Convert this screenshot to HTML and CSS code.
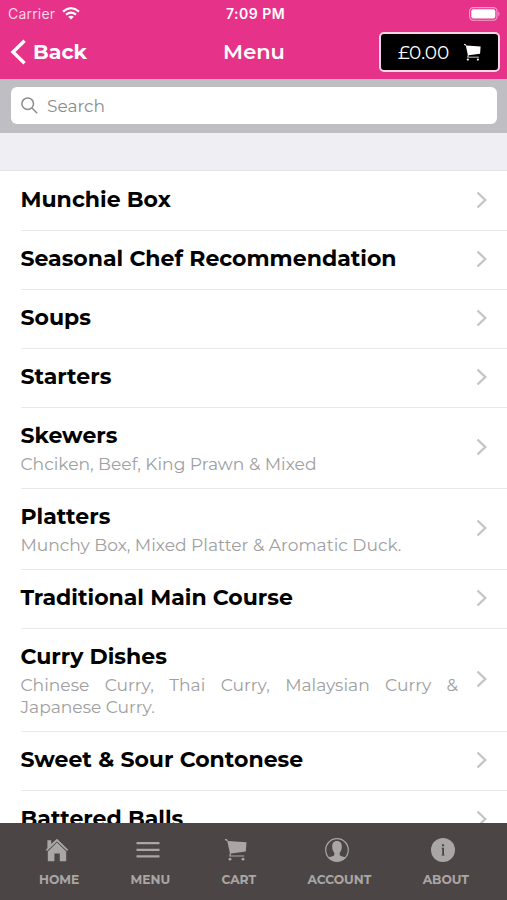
FILE: index.html
```html
<!DOCTYPE html>
<html lang="en">
<head>
<meta charset="UTF-8">
<meta name="viewport" content="width=device-width, initial-scale=1.0">
<title>Menu</title>
<link rel="stylesheet" href="styles.css">
</head>
<body>
<svg class="defs">
    <symbol id="cart" viewBox="0 0 22 22">
        <path d="M0 0 H1.8 L3 2 L21.5 3.2 L20.8 12.6 L6 14.4 L5.6 16.4 H19.3 V17.5 H4.2 L4.9 14 L2.4 2.4 L0 1Z"/>
        <circle cx="5" cy="20.2" r="1.4"/>
        <circle cx="18" cy="20.2" r="1.4"/>
    </symbol>
    <symbol id="chevron" viewBox="0 0 11 18">
        <path d="M1.5 1.5 L9.3 9 L1.5 16.5" fill="none" stroke="#c5c5c7" stroke-width="2.4"/>
    </symbol>
</svg>

<header>
    <div class="status">
        <div class="carrier">
            <span>Carrier</span>
            <svg width="18" height="13" viewBox="0 0 18 13" fill="none" stroke="#fff" stroke-width="2.2">
                <path d="M1 4.6 Q9 -2.2 17 4.6"/>
                <path d="M4 7.7 Q9 3.6 14 7.7"/>
                <path d="M6.2 9.7 Q9 7.7 11.8 9.7 L9 12.6Z" fill="#fff" stroke="none"/>
            </svg>
        </div>
        <div class="time">7:09 PM</div>
        <svg class="battery" width="32" height="14" viewBox="0 0 32 14">
            <rect x="0.6" y="0.6" width="27.4" height="12.6" rx="3.6" fill="none" stroke="#f4a3cd" stroke-width="1.1"/>
            <rect x="2.3" y="2.3" width="24" height="9.2" rx="2" fill="#fff"/>
            <path d="M29.4 4.6 Q31.6 6.9 29.4 9.2Z" fill="#f4a3cd"/>
        </svg>
    </div>
    <div class="navbar">
        <div class="back">
            <svg width="16" height="26" viewBox="0 0 16 26"><path d="M14.6 1.8 L3 13 L14.6 24.2" fill="none" stroke="#fff" stroke-width="3.4"/></svg>
            <span>Back</span>
        </div>
        <h1>Menu</h1>
        <div class="basket">
            <span>£0.00</span>
            <svg width="17" height="17"><use href="#cart"/></svg>
        </div>
    </div>
</header>

<div class="searchbar">
    <div class="search">
        <svg width="17" height="17" viewBox="0 0 17 17" fill="none" stroke="#8b8b8d" stroke-width="1.5"><circle cx="6.7" cy="6.7" r="5.8"/><path d="M11 11 L16.2 16.2"/></svg>
        <span>Search</span>
    </div>
</div>

<div class="spacer"></div>

<main>
    <div class="row">
        <div class="text"><h2>Munchie Box</h2></div>
        <svg class="chevron"><use href="#chevron"/></svg>
    </div>
    <div class="row">
        <div class="text"><h2>Seasonal Chef Recommendation</h2></div>
        <svg class="chevron"><use href="#chevron"/></svg>
    </div>
    <div class="row">
        <div class="text"><h2>Soups</h2></div>
        <svg class="chevron"><use href="#chevron"/></svg>
    </div>
    <div class="row">
        <div class="text"><h2>Starters</h2></div>
        <svg class="chevron"><use href="#chevron"/></svg>
    </div>
    <div class="row">
        <div class="text">
            <h2>Skewers</h2>
            <p>Chciken, Beef, King Prawn &amp; Mixed</p>
        </div>
        <svg class="chevron"><use href="#chevron"/></svg>
    </div>
    <div class="row">
        <div class="text">
            <h2>Platters</h2>
            <p>Munchy Box, Mixed Platter &amp; Aromatic Duck.</p>
        </div>
        <svg class="chevron"><use href="#chevron"/></svg>
    </div>
    <div class="row">
        <div class="text"><h2>Traditional Main Course</h2></div>
        <svg class="chevron"><use href="#chevron"/></svg>
    </div>
    <div class="row">
        <div class="text">
            <h2>Curry Dishes</h2>
            <p>Chinese Curry, Thai Curry, Malaysian Curry &amp; Japanese Curry.</p>
        </div>
        <svg class="chevron"><use href="#chevron"/></svg>
    </div>
    <div class="row">
        <div class="text"><h2>Sweet &amp; Sour Contonese</h2></div>
        <svg class="chevron"><use href="#chevron"/></svg>
    </div>
    <div class="row">
        <div class="text"><h2>Battered Balls</h2></div>
        <svg class="chevron"><use href="#chevron"/></svg>
    </div>
</main>

<nav class="tabs">
    <div class="tab">
        <svg viewBox="0 0 24 24"><path d="M0.8 11.8 L2.4 10.2 V2.2 H6.2 V6 L12 0.8 L23.2 11.8 L22 13 L12 3.6 L2 13Z"/><path d="M2.8 13.4 L12 4.6 L21.2 13.4 V23.2 H14.8 V15.6 H9.4 V23.2 H2.8Z"/></svg>
        <span>HOME</span>
    </div>
    <div class="tab">
        <svg viewBox="0 0 24 24"><path d="M0.5 4 H23.5 V6.2 H0.5Z M0.5 10.8 H23.5 V13 H0.5Z M0.5 17.2 H23.5 V19.4 H0.5Z"/></svg>
        <span>MENU</span>
    </div>
    <div class="tab">
        <svg viewBox="-1 -1 24 24"><use href="#cart" width="22" height="22"/></svg>
        <span>CART</span>
    </div>
    <div class="tab">
        <svg viewBox="0 0 24 24"><circle cx="12" cy="12" r="11.3" fill="none" stroke="#aaa6a5" stroke-width="1.2"/><path d="M12 3 C8.6 3 7 5.2 7.2 9 C7.3 12 8.4 13.4 9.3 15 V17 C8.5 18.5 5 18.5 3.4 19.6 C5.4 22 8.5 23.2 12 23.2 C15.5 23.2 18.6 22 20.6 19.6 C19 18.5 15.5 18.5 14.7 17 V15 C15.6 13.4 16.7 12 16.8 9 C17 5.2 15.4 3 12 3Z"/></svg>
        <span>ACCOUNT</span>
    </div>
    <div class="tab">
        <svg viewBox="0 0 24 24"><circle cx="12" cy="12" r="12"/><path d="M11 6.2 H13.1 V8.2 H11Z M10.4 9.7 H13 V16.7 H13.8 V17.6 H10.4 V16.7 H11.2 V10.6 H10.4Z" fill="#4b4645"/></svg>
        <span>ABOUT</span>
    </div>
</nav>
</body>
</html>
```
FILE: styles.css
```css
* {
    box-sizing: border-box;
}
body {
    font-family: Montserrat, Inter, sans-serif;
    margin: 0;
    height: 900px;
    display: flex;
    flex-direction: column;
    overflow: hidden;
    background-color: #fff;
}
.defs {
    display: none;
}
h1, h2, p {
    margin: 0;
}
header {
    height: 79px;
    flex-shrink: 0;
    background-color: #e73289;
    color: #fff;
}
.status {
    height: 27px;
    padding: 0 6px 0 8px;
    display: grid;
    grid-template-columns: 1fr auto 1fr;
    align-items: center;
    font-family: Inter, sans-serif;
    font-size: 14px;
}
.carrier {
    display: flex;
    align-items: center;
    gap: 7px;
    color: #fbd3e6;
    letter-spacing: 0.2px;
}
.time {
    padding-left: 2px;
    font-weight: 600;
    letter-spacing: 0.5px;
}
.battery {
    justify-self: end;
}
.navbar {
    height: 50px;
    padding: 0 7px 0 10px;
    display: grid;
    grid-template-columns: 1fr auto 1fr;
    align-items: center;
}
.back {
    display: flex;
    align-items: center;
    gap: 7px;
    font-size: 20.5px;
    font-weight: 700;
}
.back span {
    padding-bottom: 1px;
}
h1 {
    padding: 0 2px 2px 0;
    font-size: 21px;
    font-weight: 600;
}
.basket {
    justify-self: end;
    width: 121px;
    height: 40px;
    padding: 0 17px 0 17px;
    display: flex;
    align-items: center;
    justify-content: space-between;
    background-color: #000;
    border: 2px solid #f8d6e7;
    border-radius: 5px;
    font-size: 18.5px;
}
.basket svg {
    fill: #fff;
}
.searchbar {
    height: 54px;
    flex-shrink: 0;
    padding: 8px 10px 0 11px;
    background-color: #bfbec3;
}
.search {
    height: 37px;
    padding-left: 10px;
    display: flex;
    align-items: center;
    gap: 9px;
    background-color: #fff;
    border-radius: 6px;
    color: #8b8b8d;
    font-size: 17px;
}
.spacer {
    height: 38px;
    flex-shrink: 0;
    background-color: #efeef3;
    border-bottom: 1px solid #e3e3e6;
}
main {
    flex: 1;
    min-height: 0;
    padding-top: 1px;
    overflow: hidden;
}
.row {
    margin-left: 20.5px;
    padding: 14px 20px 16px 0;
    display: flex;
    align-items: center;
    gap: 18px;
    border-bottom: 1px solid #e9e9e9;
}
.text {
    flex: 1;
}
h2 {
    font-size: 22px;
    font-weight: 700;
    line-height: 28px;
    color: #000;
}
.row p {
    margin: 3px 0 -3px;
    font-size: 17.1px;
    font-weight: 400;
    line-height: 22px;
    text-align: justify;
    color: #a0a0a0;
}
.chevron {
    width: 11px;
    height: 18px;
    flex-shrink: 0;
}
.tabs {
    height: 77px;
    flex-shrink: 0;
    padding: 15px 38px 0 39px;
    display: flex;
    justify-content: space-between;
    background-color: #4b4645;
    color: #aaa6a5;
}
.tab {
    display: flex;
    flex-direction: column;
    align-items: center;
    gap: 10px;
    font-size: 12.3px;
    font-weight: 700;
    line-height: 16px;
}
.tab svg {
    width: 24px;
    height: 24px;
    margin-right: 5px;
    fill: #aaa6a5;
}
```
